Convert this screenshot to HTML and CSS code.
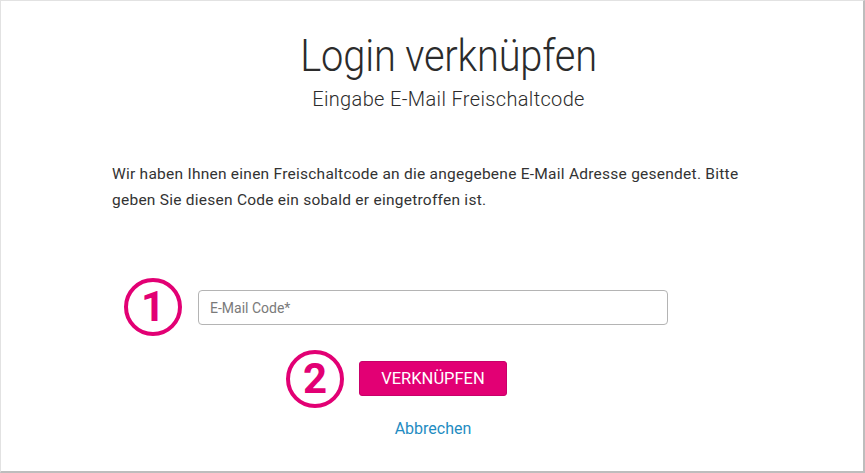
FILE: index.html
```html
<!DOCTYPE html>
<html lang="de">
<head>
<meta charset="utf-8">
<title>Login verknüpfen</title>
<link rel="stylesheet" href="styles.css">
</head>
<body>
<div class="frame">
  <header class="head">
    <h1 class="title"><span class="title-text">Login verknüpfen</span></h1>
    <p class="subtitle">Eingabe E-Mail Freischaltcode</p>
  </header>
  <p class="intro">Wir haben Ihnen einen Freischaltcode an die angegebene E-Mail Adresse gesendet. Bitte geben Sie diesen Code ein sobald er eingetroffen ist.</p>
  <div class="form">
    <div class="field-row">
      <span class="step step-1">1</span>
      <input class="code-input" type="text" placeholder="E-Mail Code*">
    </div>
    <div class="button-row">
      <span class="step step-2">2</span>
      <button class="btn-primary" type="button">VERKNÜPFEN</button>
    </div>
    <a class="cancel" href="#">Abbrechen</a>
  </div>
</div>
</body>
</html>
```

FILE: styles.css
```css
html, body {
  margin: 0;
  padding: 0;
  background: #fff;
}
.frame {
  width: 865px;
  height: 473px;
  box-sizing: border-box;
  border-top: 1px solid #e2e2e2;
  border-left: 1px solid #e2e2e2;
  border-right: 2px solid #bdbdbd;
  border-bottom: 2px solid #bdbdbd;
  font-family: "Roboto", "Liberation Sans", sans-serif;
  color: #262626;
  display: flex;
  flex-direction: column;
}
.head {
  text-align: center;
  padding-left: 33px;
}
.title {
  margin: 29px 0 0;
  font-size: 45px;
  line-height: 52px;
  font-weight: 300;
  color: #2b2b2b;
}
.title-text {
  display: inline-block;
  letter-spacing: -0.2px;
  transform: scaleX(0.885);
  white-space: nowrap;
}
.subtitle {
  margin: 4px 0 0;
  font-size: 20px;
  line-height: 26px;
  font-weight: 300;
  letter-spacing: 0.35px;
  color: #2b2b2b;
}
.intro {
  margin: 49px 0 0 111px;
  width: 660px;
  font-size: 15.5px;
  line-height: 26px;
  letter-spacing: 0.25px;
  color: #333;
}
.form {
  display: flex;
  flex-direction: column;
  align-items: center;
  margin-top: 77px;
  padding-left: 2px;
}
.field-row, .button-row {
  position: relative;
  display: flex;
}
.code-input {
  width: 470px;
  height: 35px;
  box-sizing: border-box;
  border: 1px solid #b4b4b4;
  border-radius: 4px;
  padding: 0 11px;
  font-family: "Roboto", "Liberation Sans", sans-serif;
  font-size: 14px;
  color: #333;
  outline: none;
}
.code-input::placeholder {
  color: #7a7a7a;
}
.button-row {
  margin-top: 36px;
}
.btn-primary {
  width: 148px;
  height: 35px;
  background: #e20074;
  color: #fff;
  border: 1px solid #c8006a;
  border-radius: 3px;
  font-family: "Roboto", "Liberation Sans", sans-serif;
  font-size: 16.5px;
  padding: 0;
  cursor: pointer;
}
.step {
  position: absolute;
  top: 50%;
  right: calc(100% + 15px);
  width: 58px;
  height: 58px;
  margin-top: -29px;
  box-sizing: border-box;
  border: 4px solid #e20074;
  border-radius: 50%;
  color: #e20074;
  font-family: "Roboto", "Liberation Sans", sans-serif;
  font-weight: bold;
  font-size: 42px;
  line-height: 50px;
  text-align: center;
}
.step-1 {
  right: calc(100% + 16px);
  margin-top: -30px;
}
.cancel {
  margin-top: 23px;
  font-size: 16px;
  line-height: 20px;
  color: #1f8cc2;
  text-decoration: none;
}
```
